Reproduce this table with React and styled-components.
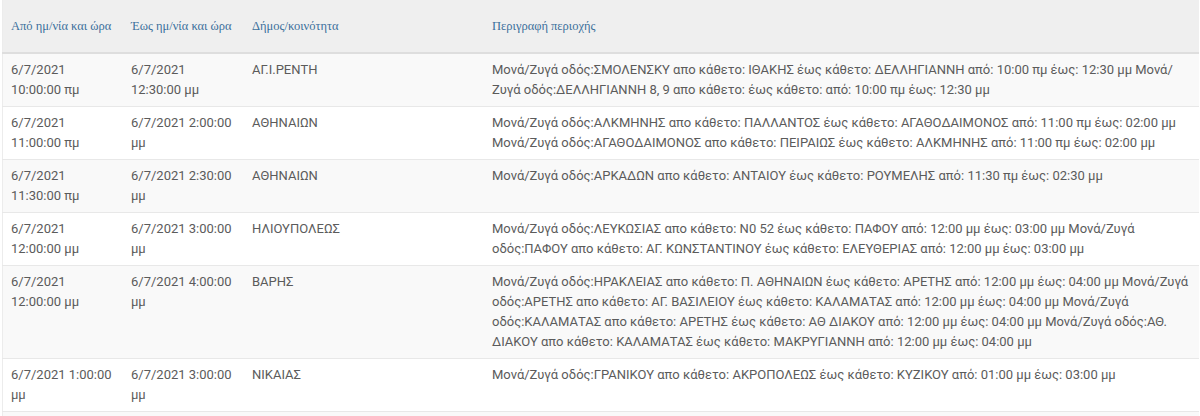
import React from 'react'
import styled, { createGlobalStyle } from 'styled-components'

const GlobalStyle = createGlobalStyle`
  body {
    margin: 0;
    background: #ffffff;
    font-family: Roboto, "Noto Sans", sans-serif;
    overflow-x: hidden;
  }
`

const Wrapper = styled.div`
  padding-left: 2px;
  width: 1197px;
`

const Table = styled.table`
  width: 1197px;
  border-collapse: collapse;
  table-layout: fixed;
  border-left: 1px solid #ececec;
`

const HeadCell = styled.th`
  width: ${p => p.$w ? p.$w + 'px' : 'auto'};
  height: 52px;
  padding: 0 8px;
  text-align: left;
  vertical-align: middle;
  font-family: "Liberation Serif", "DejaVu Serif", serif;
  font-weight: normal;
  font-size: 12.5px;
  color: #3c6f9c;
  background: #efefef;
  border-bottom: 2px solid #dedede;
`

const Row = styled.tr`
  background: ${p => p.$odd ? '#f9f9f9' : '#ffffff'};
  border-top: 1px solid #e8e8e8;
`

const Cell = styled.td`
  padding: 6px 8px;
  vertical-align: top;
  font-size: 13px;
  line-height: 20px;
  color: #5b5b5b;
  white-space: pre-line;
  height: ${p => p.$h ? p.$h + 'px' : 'auto'};

  &:last-child {
    padding-right: 0;
  }
`

const rows = [
  ['6/7/2021 10:00:00 πμ', '6/7/2021 12:30:00 μμ', 'ΑΓ.Ι.ΡΕΝΤΗ',
    'Μονά/Ζυγά οδός:ΣΜΟΛΕΝΣΚΥ απο κάθετο: ΙΘΑΚΗΣ έως κάθετο: ΔΕΛΛΗΓΙΑΝΝΗ από: 10:00 πμ έως: 12:30 μμ Μονά/\nΖυγά οδός:ΔΕΛΛΗΓΙΑΝΝΗ 8, 9 απο κάθετο: έως κάθετο: από: 10:00 πμ έως: 12:30 μμ'],
  ['6/7/2021 11:00:00 πμ', '6/7/2021 2:00:00 μμ', 'ΑΘΗΝΑΙΩΝ',
    'Μονά/Ζυγά οδός:ΑΛΚΜΗΝΗΣ απο κάθετο: ΠΑΛΛΑΝΤΟΣ έως κάθετο: ΑΓΑΘΟΔΑΙΜΟΝΟΣ από: 11:00 πμ έως: 02:00 μμ Μονά/Ζυγά οδός:ΑΓΑΘΟΔΑΙΜΟΝΟΣ απο κάθετο: ΠΕΙΡΑΙΩΣ έως κάθετο: ΑΛΚΜΗΝΗΣ από: 11:00 πμ έως: 02:00 μμ'],
  ['6/7/2021 11:30:00 πμ', '6/7/2021 2:30:00 μμ', 'ΑΘΗΝΑΙΩΝ',
    'Μονά/Ζυγά οδός:ΑΡΚΑΔΩΝ απο κάθετο: ΑΝΤΑΙΟΥ έως κάθετο: ΡΟΥΜΕΛΗΣ από: 11:30 πμ έως: 02:30 μμ'],
  ['6/7/2021 12:00:00 μμ', '6/7/2021 3:00:00 μμ', 'ΗΛΙΟΥΠΟΛΕΩΣ',
    'Μονά/Ζυγά οδός:ΛΕΥΚΩΣΙΑΣ απο κάθετο: Ν0 52 έως κάθετο: ΠΑΦΟΥ από: 12:00 μμ έως: 03:00 μμ Μονά/Ζυγά οδός:ΠΑΦΟΥ απο κάθετο: ΑΓ. ΚΩΝΣΤΑΝΤΙΝΟΥ έως κάθετο: ΕΛΕΥΘΕΡΙΑΣ από: 12:00 μμ έως: 03:00 μμ'],
  ['6/7/2021 12:00:00 μμ', '6/7/2021 4:00:00 μμ', 'ΒΑΡΗΣ',
    'Μονά/Ζυγά οδός:ΗΡΑΚΛΕΙΑΣ απο κάθετο: Π. ΑΘΗΝΑΙΩΝ έως κάθετο: ΑΡΕΤΗΣ από: 12:00 μμ έως: 04:00 μμ Μονά/Ζυγά οδός:ΑΡΕΤΗΣ απο κάθετο: ΑΓ. ΒΑΣΙΛΕΙΟΥ έως κάθετο: ΚΑΛΑΜΑΤΑΣ από: 12:00 μμ έως: 04:00 μμ Μονά/Ζυγά οδός:ΚΑΛΑΜΑΤΑΣ απο κάθετο: ΑΡΕΤΗΣ έως κάθετο: ΑΘ ΔΙΑΚΟΥ από: 12:00 μμ έως: 04:00 μμ Μονά/Ζυγά οδός:ΑΘ. ΔΙΑΚΟΥ απο κάθετο: ΚΑΛΑΜΑΤΑΣ έως κάθετο: ΜΑΚΡΥΓΙΑΝΝΗ από: 12:00 μμ έως: 04:00 μμ'],
  ['6/7/2021 1:00:00 μμ', '6/7/2021 3:00:00 μμ', 'ΝΙΚΑΙΑΣ',
    'Μονά/Ζυγά οδός:ΓΡΑΝΙΚΟΥ απο κάθετο: ΑΚΡΟΠΟΛΕΩΣ έως κάθετο: ΚΥΖΙΚΟΥ από: 01:00 μμ έως: 03:00 μμ'],
]

export default function App() {
  return (
    <>
      <GlobalStyle />
      <Wrapper>
        <Table>
          <thead>
            <tr>
              <HeadCell $w={104}>Από ημ/νία και ώρα</HeadCell>
              <HeadCell $w={105}>Έως ημ/νία και ώρα</HeadCell>
              <HeadCell $w={224}>Δήμος/κοινότητα</HeadCell>
              <HeadCell>Περιγραφή περιοχής</HeadCell>
            </tr>
          </thead>
          <tbody>
            {rows.map((r, i) => (
              <Row key={i} $odd={i % 2 === 0}>
                {r.map((c, j) => <Cell key={j}>{c}</Cell>)}
              </Row>
            ))}
            <Row $odd>
              <Cell $h={40} />
              <Cell />
              <Cell />
              <Cell />
            </Row>
          </tbody>
        </Table>
      </Wrapper>
    </>
  )
}
